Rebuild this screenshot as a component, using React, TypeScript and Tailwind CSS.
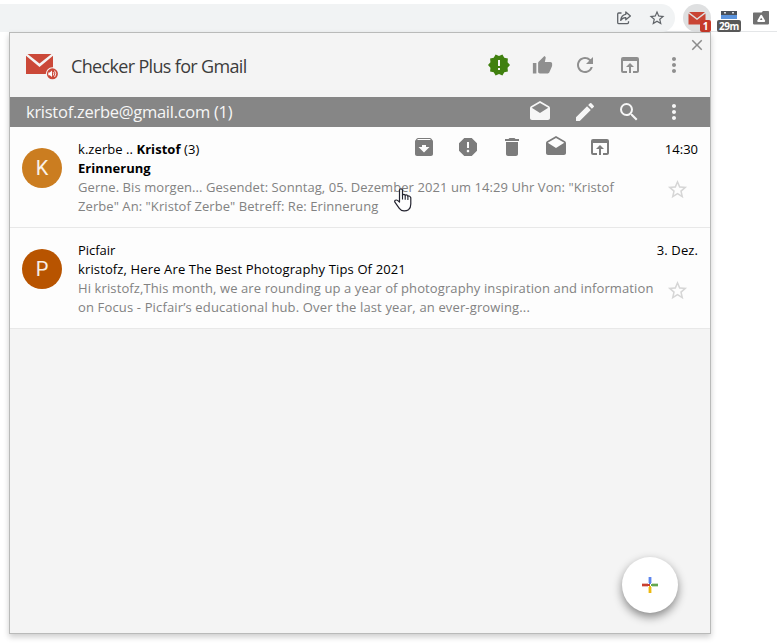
import {
  MdArchive, MdClose, MdDelete, MdDrafts, MdEdit, MdMoreVert, MdNewReleases,
  MdOpenInBrowser, MdRefresh, MdReport, MdSearch, MdStarBorder, MdThumbUp,
} from "react-icons/md";

const cell = "flex w-11 shrink-0 items-center justify-center";
const barCell = "flex w-[44.6px] shrink-0 items-center justify-center";

function BrowserBar() {
  return (
    <div className="flex h-8 shrink-0 items-start border-b border-[#e4e6e8] pt-1">
      <div className="flex h-7 w-[675px] items-center justify-end rounded-r-full bg-[#f1f3f4] pr-[9px] text-[#5f6368]">
        <svg className="mr-4 h-4 w-4" viewBox="0 0 16 16" fill="none" stroke="currentColor" strokeWidth="1.3" strokeLinejoin="round">
          <path d="M5.5 3H2.7Q1.7 3 1.7 4V12.5Q1.7 13.7 2.9 13.7H11.4Q12.5 13.7 12.5 12.6V11.2" />
          <path d="M9.8 1.9L14.4 5.9L9.8 9.8V7.6Q6.6 7.4 4.7 10.4Q5.2 5 9.8 4.3Z" />
        </svg>
        <MdStarBorder className="h-[18px] w-[18px]" />
      </div>
      <div className="relative ml-2 h-7 w-7 rounded-full bg-[#dfe0e1]">
        <svg className="absolute left-[5px] top-2" width="18" height="13" viewBox="0 0 18 13">
          <path fill="#c94434" d="M1 0H17L9 6.2ZM0.5 1.4L9 8L17.5 1.4V12.5H0.5Z" />
        </svg>
        <span className="absolute left-[17px] top-4 h-3 w-[11px] rounded-[2px] bg-[#c53929] text-center font-['Open_Sans',sans-serif] text-[10px] leading-3 font-bold text-white">1</span>
      </div>
      <div className="relative ml-[6px] h-7 w-6">
        <svg className="absolute left-1 top-[7px]" width="16" height="9" viewBox="0 0 16 9">
          <path fill="#49505a" d="M0 0H16V4H0Z" />
          <path fill="#5b93dc" d="M0 4H16V8H0Z" />
          <path fill="#d7dade" d="M3 1H5V2.5H3ZM11 1H13V2.5H11Z" />
        </svg>
        <span className="absolute left-0 top-4 h-3 w-6 rounded-[2px] bg-[#585858] text-center font-['Open_Sans',sans-serif] text-[10px] leading-3 font-bold tracking-[-0.4px] text-white">29m</span>
      </div>
      <svg className="ml-3 mt-[7px]" width="16" height="14" viewBox="0 0 16 14">
        <path fill="#717171" d="M0 2.2Q0 1.5 .8 1.5H8.5L10 0H15.2Q16 0 16 .8V12.6Q16 13.4 15.2 13.4H.8Q0 13.4 0 12.6Z" />
        <path fill="none" stroke="white" strokeWidth="1.9" strokeLinejoin="round" d="M8.2 4.8L5.2 10H11.2Z" />
      </svg>
    </div>
  );
}

function MailLogo() {
  return (
    <svg className="mt-[3px] h-[26px] w-8" viewBox="0 0 32 26">
      <path fill="#cb4838" d="M1.5 0H25.5L13.5 9.5ZM0 1.8L13.5 13L27 1.8V20H0Z" />
      <circle cx="26.4" cy="19.8" r="6.6" fill="#f4f4f4" />
      <circle cx="26.4" cy="19.8" r="5.5" fill="#cb4838" />
      <path fill="#fff" d="M22.3 18.4H23.8L26 16.5V23.1L23.8 21.2H22.3Z" />
      <path fill="none" stroke="#fff" strokeWidth=".9" d="M27.2 18.1Q28.4 19.8 27.2 21.5M28.6 16.6Q31 19.8 28.6 23" />
    </svg>
  );
}

function Header() {
  return (
    <div className="relative flex h-16 shrink-0 items-center pl-4 pr-[14px]">
      <MailLogo />
      <h1 className="ml-[13px] flex-1 pt-[2px] text-[18px] leading-6 tracking-[-0.66px] whitespace-nowrap text-[#3c3c3c]">Checker Plus for Gmail</h1>
      <div className="flex text-[24px] text-[#8f8f8f]">
        <div className={cell}><MdNewReleases className="translate-x-px text-[#40800f]" /></div>
        <div className={cell}><MdThumbUp className="text-[21px]" /></div>
        <div className={cell}><MdRefresh className="-translate-x-px" /></div>
        <div className={cell}><MdOpenInBrowser /></div>
        <div className={cell}><MdMoreVert /></div>
      </div>
      <MdClose className="absolute right-[4px] top-[3px] text-[18px] text-[#8b8b8b]" />
    </div>
  );
}

function AccountBar() {
  return (
    <div className="flex h-[30px] shrink-0 items-center bg-[#868686] pl-4 pr-[14px] text-[#f6f6f6]">
      <div className="flex-1 text-[16.5px] leading-6 tracking-[-0.27px] whitespace-nowrap">kristof.zerbe@gmail.com (1)</div>
      <div className="flex text-[24px]">
        <div className={barCell}><MdDrafts /></div>
        <div className={barCell}><MdEdit /></div>
        <div className={barCell}><MdSearch /></div>
        <div className={barCell}><MdMoreVert /></div>
      </div>
    </div>
  );
}

function RowActions() {
  return (
    <div className="mr-[43px] -mt-[5px] flex text-[24px] text-[#7c7c7c]">
      <div className={cell}><MdArchive /></div>
      <div className={cell}><MdReport /></div>
      <div className={cell}><MdDelete /></div>
      <div className={cell}><MdDrafts /></div>
      <div className={cell}><MdOpenInBrowser /></div>
    </div>
  );
}

function Avatar({ letter, color }: { letter: string; color: string }) {
  return (
    <div className={`mt-2 mr-4 flex h-10 w-10 shrink-0 items-center justify-center rounded-full font-[Roboto,sans-serif] text-[20px] text-white/90 ${color}`}>
      {letter}
    </div>
  );
}

const rowClass = "flex h-[101px] shrink-0 border-b border-[#e8e8e8] bg-[#fdfdfd] pl-3 pr-3 pt-[13px] text-[13px] leading-[19px] whitespace-nowrap text-black";

function Messages() {
  return (
    <>
      <div className={rowClass}>
        <Avatar letter="K" color="bg-[#cb7d20]" />
        <div className="min-w-0 flex-1">
          <div className="flex h-[19px] items-center">
            <div className="flex-1 tracking-[0.06px]">k.zerbe .. <b>Kristof</b> (3)</div>
            <RowActions />
            <div>14:30</div>
          </div>
          <div className="font-bold tracking-[0.05px]">Erinnerung</div>
          <div className="flex text-[#828282]">
            <div className="flex-1">
              <div className="tracking-[0.07px]">Gerne. Bis morgen... Gesendet: Sonntag, 05. Dezember 2021 um 14:29 Uhr Von: "Kristof</div>
              <div className="tracking-[0.07px]">Zerbe" An: "Kristof Zerbe" Betreff: Re: Erinnerung</div>
            </div>
            <MdStarBorder className="mr-[9px] text-[23px] text-[#d6d6d6]" />
          </div>
        </div>
      </div>
      <div className={rowClass}>
        <Avatar letter="P" color="bg-[#b85400]" />
        <div className="min-w-0 flex-1">
          <div className="flex">
            <div className="flex-1 tracking-[-0.05px]">Picfair</div>
            <div className="tracking-[0.1px]">3. Dez.</div>
          </div>
          <div className="tracking-[0.13px]">kristofz, Here Are The Best Photography Tips Of 2021</div>
          <div className="flex text-[#828282]">
            <div className="flex-1">
              <div className="tracking-[0.11px]">Hi kristofz,This month, we are rounding up a year of photography inspiration and information</div>
              <div className="tracking-[0.145px]">on Focus - Picfair’s educational hub. Over the last year, an ever-growing...</div>
            </div>
            <MdStarBorder className="mr-[9px] text-[23px] text-[#d6d6d6]" />
          </div>
        </div>
      </div>
    </>
  );
}

export default function App() {
  return (
    <div className="relative flex h-[644px] w-[777px] flex-col overflow-hidden bg-white font-['Open_Sans','Noto_Sans',sans-serif]">
      <BrowserBar />
      <div className="relative ml-[9px] flex h-[602px] w-[702px] flex-col border border-[#b9bab9] bg-[#f4f4f4] shadow-[0_3px_6px_rgba(0,0,0,0.2)]">
        <Header />
        <AccountBar />
        <Messages />
        <button className="absolute right-8 bottom-5 flex h-14 w-14 items-center justify-center rounded-full bg-white shadow-[0_4px_10px_rgba(0,0,0,0.45)]">
          <svg width="16" height="16" viewBox="0 0 16 16">
            <path fill="#5c85ee" d="M7 0H9V7H7Z" />
            <path fill="#c93f2f" d="M0 7H8V9H0Z" />
            <path fill="#63a750" d="M9 7H16V9H9Z" />
            <path fill="#edb90f" d="M7 9H9V16H7Z" />
            <path fill="#5c85ee" opacity=".4" d="M6 0H7V6H6ZM9 0H10V6H9Z" />
            <path fill="#c93f2f" opacity=".35" d="M0 6H6V7H0ZM0 9H6V10H0Z" />
            <path fill="#63a750" opacity=".35" d="M10 6H16V7H10ZM10 9H16V10H10Z" />
            <path fill="#edb90f" opacity=".4" d="M6 10H7V16H6ZM9 10H10V16H9Z" />
          </svg>
        </button>
      </div>
      <svg className="absolute left-[394px] top-[188px]" width="18" height="24" viewBox="0 0 18 24">
        <path
          fill="white" stroke="#23232f" strokeWidth="1.2" strokeLinejoin="round"
          d="M5.5 14V2.3Q5.5 .8 7 .8T8.5 2.3V7.5Q8.5 6.3 9.8 6.3T11.2 7.6Q11.4 6.8 12.4 6.8T13.8 8.3Q14.2 7.8 15.2 8T16.8 9.8V16Q16.8 20 14.5 21.7Q12.5 23 10 22.9Q7 22.8 5.3 20.4L.9 14.2Q.3 13 1.3 12.3Q2.6 11.6 3.8 12.6Z"
        />
        <path fill="none" stroke="#23232f" strokeWidth="1.1" d="M8.5 7V11.5M11.2 8V11.8M13.9 8.5V12" />
      </svg>
    </div>
  );
}
